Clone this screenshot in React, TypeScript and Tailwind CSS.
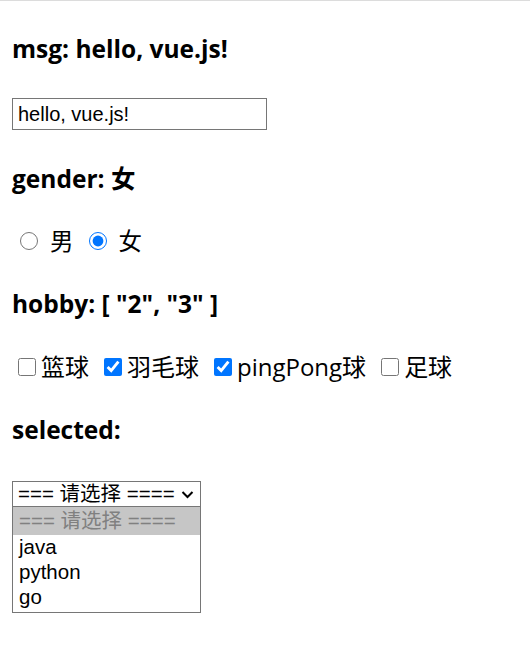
import { useState } from "react";

const headFont = { fontFamily: '"Open Sans", "Noto Sans CJK SC", sans-serif' };

export default function App() {
  const [msg, setMsg] = useState("hello, vue.js!");
  const [gender, setGender] = useState("女");
  const [hobby, setHobby] = useState<string[]>(["2", "3"]);

  const hobbies = [
    { v: "1", label: "篮球" },
    { v: "2", label: "羽毛球" },
    { v: "3", label: "pingPong球" },
    { v: "4", label: "足球" },
  ];

  const toggle = (v: string) =>
    setHobby((prev) => (prev.includes(v) ? prev.filter((x) => x !== v) : [...prev, v]));

  return (
    <div className="min-h-[651px] bg-white border-t border-[#dcdcdc] px-3 text-black">
      {/* msg */}
      <h3 className="mt-[34px] text-[24.5px] font-bold leading-[28px]" style={headFont}>
        msg: {msg}
      </h3>
      <input
        value={msg}
        onChange={(e) => setMsg(e.target.value)}
        className="mt-[35px] block h-8 w-[255px] border border-[#767676] px-[5px] text-[20px] outline-none"
        style={{ fontFamily: '"Liberation Sans", Arial, sans-serif' }}
      />

      {/* gender */}
      <h3 className="mt-[35px] text-[24.5px] font-bold leading-[28px]" style={headFont}>
        gender: {gender}
      </h3>
      <div
        className="mt-[34px] flex h-7 items-center text-[23.5px]"
        style={{ fontFamily: '"Noto Sans CJK SC", sans-serif' }}
      >
        {["男", "女"].map((g) => (
          <label key={g} className="flex items-center">
            <input
              type="radio"
              checked={gender === g}
              onChange={() => setGender(g)}
              className="ml-2 mr-3 h-[18px] w-[18px] accent-[#0075ff]"
            />
            <span className="mr-[7px]">{g}</span>
          </label>
        ))}
      </div>

      {/* hobby */}
      <h3 className="mt-[35px] text-[24.5px] font-bold leading-[28px]" style={headFont}>
        hobby: [ {hobby.map((h) => `"${h}"`).join(", ")} ]
      </h3>
      <div
        className="mt-[35px] flex h-7 items-center gap-[15px] text-[24px]"
        style={{ fontFamily: '"Open Sans", "Noto Sans CJK SC", sans-serif' }}
      >
        {hobbies.map((h) => (
          <label key={h.v} className="flex items-center first:ml-[6px]">
            <input
              type="checkbox"
              checked={hobby.includes(h.v)}
              onChange={() => toggle(h.v)}
              className="mr-[5px] h-[18px] w-[18px] accent-[#0075ff]"
            />
            <span>{h.label}</span>
          </label>
        ))}
      </div>

      {/* selected */}
      <h3 className="mt-[35px] text-[24.5px] font-bold leading-[28px]" style={headFont}>
        selected:
      </h3>
      <div
        className="mt-[37px] w-[189px] text-[20.5px]"
        style={{ fontFamily: '"Liberation Sans", "Noto Sans CJK SC", sans-serif' }}
      >
        <div className="flex h-[26px] items-center justify-between border border-[#767676] pl-[5px] pr-[6px] leading-none">
          <span>=== 请选择 ====</span>
          <svg width="13" height="9" viewBox="0 0 13 9" fill="none">
            <path d="M1.5 2 L6.5 7 L11.5 2" stroke="#000" strokeWidth="2" />
          </svg>
        </div>
        <div className="border border-t-0 border-[#767676] pb-[2px]">
          <div className="flex h-[28px] items-center bg-[#c6c6c6] px-[6px] text-[#808080]">
            === 请选择 ====
          </div>
          {["java", "python", "go"].map((o) => (
            <div key={o} className="flex h-[25px] items-center px-[6px]">
              {o}
            </div>
          ))}
        </div>
      </div>
    </div>
  );
}
